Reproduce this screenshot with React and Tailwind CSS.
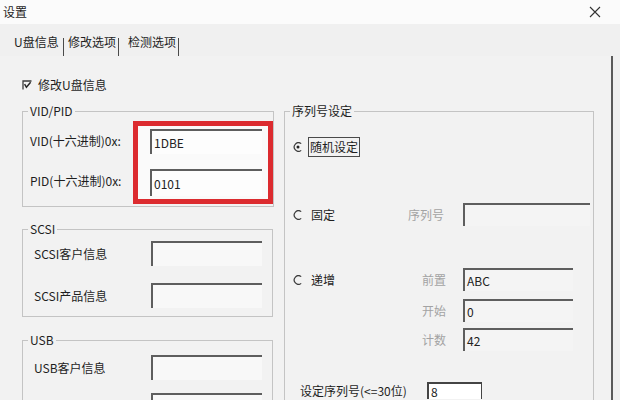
import clsx from 'clsx';

const Box = ({ className, children }) => (
  <div
    className={clsx(
      'flex border-t-2 border-l-2 border-[#5e5e5e] pl-[2px] text-[#222]',
      className
    )}
  >
    {children}
  </div>
);

const Radio = ({ checked }) => (
  <svg width="10" height="10" viewBox="0 0 10 10" className="shrink-0">
    <path d="M8.2 1.6 A4.3 4.3 0 1 0 8.2 8.4" fill="none" stroke="#3a3a3a" strokeWidth="1.2" />
    {checked && <circle cx="5" cy="5" r="1.5" fill="#222" />}
  </svg>
);

const Check = () => (
  <svg width="10" height="10" viewBox="0 0 10 10" className="shrink-0">
    <path d="M1 9.5 V1 H9.5" fill="none" stroke="#3a3a3a" strokeWidth="1.3" />
    <path d="M2.6 4.2 L4.4 7.2 L8.6 2.2" fill="none" stroke="#222" strokeWidth="1.4" />
  </svg>
);

const Group = ({ title, className, children }) => (
  <fieldset className={clsx('border border-[#c4c4c4]', className)}>
    <legend className="ml-[5px] px-[2px] leading-[16px]">{title}</legend>
    {children}
  </fieldset>
);

export default function App() {
  return (
    <div className="w-[620px] h-[400px] overflow-hidden bg-[#f0f0f0] text-[12px] leading-[16px] text-[#1e1e1e] font-['Noto_Sans_CJK_SC','Microsoft_YaHei',sans-serif] flex flex-col">
      {/* title bar */}
      <div className="h-[24px] shrink-0 bg-[#fbfbfb] flex items-center justify-between pl-[3px] pr-[19px]">
        <span>设置</span>
        <svg width="12" height="12" viewBox="0 0 12 12">
          <path d="M1 1 L11 11 M11 1 L1 11" stroke="#333" strokeWidth="1.1" />
        </svg>
      </div>

      {/* tabs */}
      <div className="mt-[10px] h-[22px] shrink-0 flex items-start pl-[14px]">
        <span className="w-[49px]">U盘信息</span>
        <div className="mt-[4px] h-[18px] w-px bg-[#4a4a4a]" />
        <span className="w-[54px] pl-[4px]">修改选项</span>
        <div className="mt-[4px] h-[18px] w-px bg-[#4a4a4a]" />
        <span className="w-[59px] pl-[9px]">检测选项</span>
        <div className="mt-[4px] h-[18px] w-px bg-[#4a4a4a]" />
      </div>

      {/* tab panel */}
      <div className="flex-1 w-[613px] border-r-2 border-[#5a5a5a] bg-[#f2f2f2] pl-[22px] pt-[21px] flex flex-col">
        <div className="flex items-center h-[16px]">
          <Check />
          <span className="ml-[6px]">修改U盘信息</span>
        </div>

        <div className="mt-[10px] flex items-start">
          {/* left column */}
          <div className="w-[251px] flex flex-col">
            <Group title="VID/PID" className="h-[104px]">
              <div className="mt-[2px] pl-[7px] flex">
                <div className="w-[103px] pt-[12px] flex flex-col gap-[24px]">
                  <span>VID(十六进制)0x:</span>
                  <span>PID(十六进制)0x:</span>
                </div>
                <div className="w-[140px] h-[83px] border-[5px] border-[#dc2b2f] bg-[#fafafa] pl-[12px] pt-[3px] flex flex-col gap-[15px]">
                  <Box className="w-[112px] h-[25px] items-center bg-[#fdfdfd]">1DBE</Box>
                  <Box className="w-[112px] h-[27px] items-center bg-[#fdfdfd]">0101</Box>
                </div>
              </div>
            </Group>

            <Group title="SCSI" className="mt-[14px] h-[96px]">
              <div className="mt-[4px] pl-[11px] flex flex-col gap-[17px]">
                <div className="flex items-center h-[25px]">
                  <span className="w-[117px]">SCSI客户信息</span>
                  <Box className="w-[111px] h-[25px] bg-[#f8f8f8]" />
                </div>
                <div className="flex items-center h-[25px]">
                  <span className="w-[117px]">SCSI产品信息</span>
                  <Box className="w-[111px] h-[25px] bg-[#f8f8f8]" />
                </div>
              </div>
            </Group>

            <Group title="USB" className="mt-[15px] h-[120px]">
              <div className="mt-[7px] pl-[11px] flex flex-col gap-[13px]">
                <div className="flex items-center h-[25px]">
                  <span className="w-[117px]">USB客户信息</span>
                  <Box className="w-[111px] h-[25px] bg-[#f8f8f8]" />
                </div>
                <div className="flex items-center h-[25px] pl-[117px]">
                  <Box className="w-[111px] h-[25px] bg-[#f8f8f8]" />
                </div>
              </div>
            </Group>
          </div>

          {/* right column */}
          <Group title="序列号设定" className="ml-[11px] w-[310px] h-[320px]">
            <div className="pl-[8px] flex flex-col">
              <div className="mt-[17px] h-[22px] flex items-center">
                <Radio checked />
                <span className="ml-[5px] border border-[#4a4a4a] px-[1px] leading-[18px]">随机设定</span>
              </div>

              <div className="mt-[45px] h-[23px] flex items-center">
                <div className="w-[115px] flex items-center">
                  <Radio />
                  <span className="ml-[8px]">固定</span>
                </div>
                <span className="w-[55px] text-[#a3a3a3]">序列号</span>
                <Box className="w-[127px] h-[23px] bg-[#f4f4f4]" />
              </div>

              <div className="mt-[42px] flex items-start">
                <div className="w-[115px] h-[23px] flex items-center">
                  <Radio />
                  <span className="ml-[8px]">递增</span>
                </div>
                <div className="flex flex-col">
                  <div className="h-[23px] flex items-center">
                    <span className="w-[55px] pl-[14px] text-[#a3a3a3]">前置</span>
                    <Box className="w-[110px] h-[23px] items-center bg-[#f4f4f4]">ABC</Box>
                  </div>
                  <div className="mt-[8px] h-[23px] flex items-center">
                    <span className="w-[55px] pl-[14px] text-[#a3a3a3]">开始</span>
                    <Box className="w-[110px] h-[23px] items-center bg-[#f4f4f4]">0</Box>
                  </div>
                  <div className="mt-[6px] h-[23px] flex items-center">
                    <span className="w-[55px] pl-[14px] text-[#a3a3a3]">计数</span>
                    <Box className="w-[110px] h-[23px] items-center bg-[#f4f4f4]">42</Box>
                  </div>
                </div>
              </div>

              <div className="mt-[31px] flex items-start">
                <span className="w-[134px] pl-[7px] pt-[1px]">设定序列号(&lt;=30位)</span>
                <Box className="w-[55px] h-[17px] items-start pt-[1px] leading-[14px] bg-white border-r border-[#444]">8</Box>
              </div>
            </div>
          </Group>
        </div>
      </div>
    </div>
  );
}
